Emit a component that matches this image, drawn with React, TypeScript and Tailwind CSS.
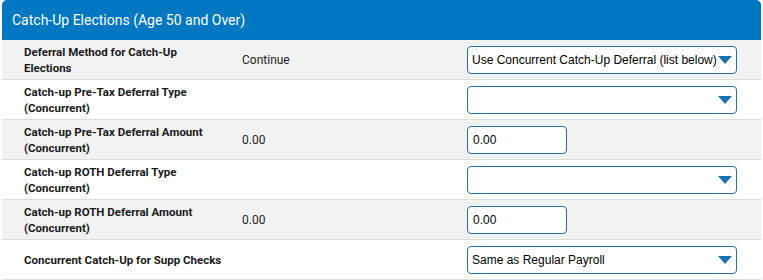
const rows = [
  { label: "Deferral Method for Catch-Up Elections", value: "Continue", kind: "select", text: "Use Concurrent Catch-Up Deferral (list below)" },
  { label: "Catch-up Pre-Tax Deferral Type (Concurrent)", value: "", kind: "select", text: "" },
  { label: "Catch-up Pre-Tax Deferral Amount (Concurrent)", value: "0.00", kind: "input", text: "0.00" },
  { label: "Catch-up ROTH Deferral Type (Concurrent)", value: "", kind: "select", text: "" },
  { label: "Catch-up ROTH Deferral Amount (Concurrent)", value: "0.00", kind: "input", text: "0.00" },
  { label: "Concurrent Catch-Up for Supp Checks", value: "", kind: "select", text: "Same as Regular Payroll" },
];

const Caret = () => (
  <svg width="14" height="8" viewBox="0 0 14 8" className="shrink-0">
    <path d="M0 0 H14 L7 8 Z" fill="#1a6fb0" />
  </svg>
);

export default function App() {
  return (
    <div className="pl-[2px] pr-[2px] font-['Roboto',sans-serif] text-[12px] text-[#222]">
      <div className="h-[40px] flex items-center pl-[10px] bg-[#0077c1] text-white text-[14px] rounded-t-[5px]">
        Catch-Up Elections (Age 50 and Over)
      </div>
      {rows.map((r, i) => (
        <div
          key={i}
          className={`grid grid-cols-[218px_225px_270px] items-center h-[40px] pl-[22px] border-b border-[#dcdcdc] ${
            i % 2 === 0 ? "bg-[#f2f2f2]" : "bg-white"
          }`}
        >
          <div className="w-[200px] font-bold text-[11.5px] leading-[16px] text-[#1a1a1a]">{r.label}</div>
          <div>{r.value}</div>
          {r.kind === "select" ? (
            <div className="h-[28px] w-[270px] flex items-center justify-between pl-[4px] pr-[4px] bg-white border border-[#2c6f9c] rounded-[4px] font-['Liberation_Sans',Arial,sans-serif] text-[12px] text-black">
              <span className="whitespace-nowrap">{r.text}</span>
              <Caret />
            </div>
          ) : (
            <div className="h-[28px] w-[100px] flex items-center pl-[5px] bg-white border border-[#2c6f9c] rounded-[4px] font-['Liberation_Sans',Arial,sans-serif] text-[12px] text-black">
              {r.text}
            </div>
          )}
        </div>
      ))}
    </div>
  );
}
